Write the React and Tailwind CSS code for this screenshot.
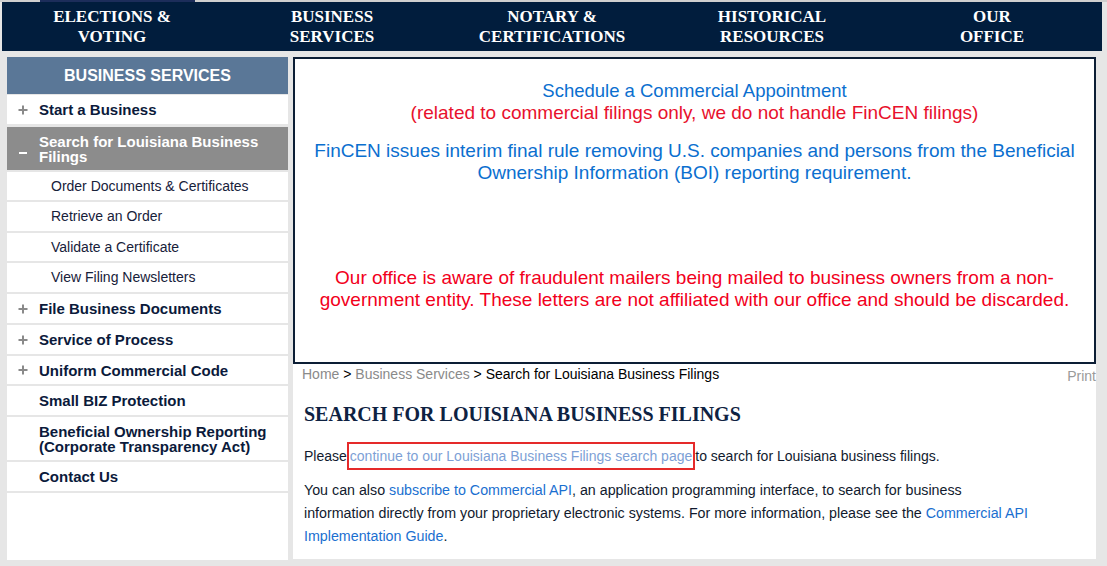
import React from "react";

const navItems = [
  ["ELECTIONS &", "VOTING"],
  ["BUSINESS", "SERVICES"],
  ["NOTARY &", "CERTIFICATIONS"],
  ["HISTORICAL", "RESOURCES"],
  ["OUR", "OFFICE"],
];

function Plus() {
  return (
    <span className="w-[10px] ml-[11px] mr-[11px] flex items-center justify-center">
      <svg width="10" height="10" viewBox="0 0 10 10">
        <rect x="4" y="0.5" width="2" height="9" fill="#8a8a8a" />
        <rect x="0.5" y="4" width="9" height="2" fill="#8a8a8a" />
      </svg>
    </span>
  );
}

function Row({ h, plus, children, bold = true, sub = false }) {
  return (
    <div
      className={`bg-white flex items-center ${bold ? "font-bold text-[15px] text-[#0b1a3b]" : "text-[14px] text-[#17213a]"}`}
      style={{ height: h }}
    >
      {sub ? <span className="w-[44px]" /> : plus ? <Plus /> : <span className="w-[32px]" />}
      <span className="leading-[15px]">{children}</span>
    </div>
  );
}

export default function App() {
  return (
    <div className="w-[1107px] h-[566px] bg-[#e6e6e6] overflow-hidden font-['Liberation_Sans',Arial,sans-serif]">
      <div className="h-[2px] flex bg-[#cfcfcf]">
        <div className="ml-[40px] w-[155px] bg-[#1c2d5a]" />
      </div>
      <nav className="ml-[2px] w-[1100px] h-[49px] bg-[#011d3d] grid grid-cols-5 items-center">
        {navItems.map(([a, b]) => (
          <div
            key={a}
            className="text-center text-white font-bold text-[17px] leading-[19.5px] font-['Liberation_Serif','Times_New_Roman',serif]"
          >
            {a}
            <br />
            {b}
          </div>
        ))}
      </nav>
      <div className="flex mt-[6px]">
        <aside className="ml-[7px] w-[281px] flex flex-col">
          <div className="h-[37px] bg-[#5a7797] flex items-center justify-center text-white font-bold text-[16px]">
            BUSINESS SERVICES
          </div>
          <div className="h-[1px]" />
          <Row h={29} plus>Start a Business</Row>
          <div className="h-[3px]" />
          <div className="h-[43px] bg-[#8c8c8c] flex items-center text-white font-bold text-[15px]">
            <span className="w-[10px] ml-[11px] mr-[11px] flex justify-center">
              <span className="block w-[8px] h-[2px] bg-white mt-[8px]" />
            </span>
            <span className="leading-[15px]">
              Search for Louisiana Business
              <br />
              Filings
            </span>
          </div>
          <div className="flex flex-col gap-[2px] mt-[2px]">
            <Row h={28} sub bold={false}>Order Documents &amp; Certificates</Row>
            <Row h={29} sub bold={false}>Retrieve an Order</Row>
            <Row h={28} sub bold={false}>Validate a Certificate</Row>
            <Row h={29} sub bold={false}>View Filing Newsletters</Row>
            <Row h={29} plus>File Business Documents</Row>
            <Row h={29} plus>Service of Process</Row>
            <Row h={28} plus>Uniform Commercial Code</Row>
            <Row h={29}>Small BIZ Protection</Row>
            <Row h={43}>
              Beneficial Ownership Reporting
              <br />
              (Corporate Transparency Act)
            </Row>
            <Row h={29}>Contact Us</Row>
            <div className="h-[67px] bg-white" />
          </div>
        </aside>
        <main className="ml-[5px] w-[803px] h-[502px] bg-white flex flex-col">
          <div className="h-[307px] border-2 border-[#0c1e35] text-center text-[19px] leading-[22px] whitespace-nowrap pt-[21px]">
            <div className="text-[#0b6fcf] text-[18.5px]">Schedule a Commercial Appointment</div>
            <div className="text-[#e8112d]">
              (related to commercial filings only, we do not handle FinCEN filings)
            </div>
            <div className="text-[#0b6fcf] mt-[16px]">
              FinCEN issues interim final rule removing U.S. companies and persons from the Beneficial
              <br />
              Ownership Information (BOI) reporting requirement.
            </div>
            <div className="text-[#f2001c] mt-[83px]">
              Our office is aware of fraudulent mailers being mailed to business owners from a non-
              <br />
              government entity. These letters are not affiliated with our office and should be discarded.
            </div>
          </div>
          <div className="flex justify-between h-[20px] text-[14px] leading-[20px] pl-[9px]">
            <div className="text-black">
              <span className="text-[#8a8a8a]">Home</span> &gt;{" "}
              <span className="text-[#8a8a8a]">Business Services</span> &gt; Search for Louisiana Business Filings
            </div>
            <div className="text-[#9a9a9a] pt-[2px]">Print</div>
          </div>
          <div className="pl-[11px]">
            <h1 className="mt-[18px] text-[20px] leading-[24px] font-bold text-[#0e2242] font-['Liberation_Serif','Times_New_Roman',serif]">
              SEARCH FOR LOUISIANA BUSINESS FILINGS
            </h1>
            <p className="mt-[19px] text-[14px] leading-[23px] text-[#111a2e] whitespace-nowrap">
              Please
              <span className="border-2 border-[#e52a2a] px-[1px] py-[4px] text-[#7d9fd6]">
                continue to our Louisiana Business Filings search page
              </span>
              to search for Louisiana business filings.
            </p>
            <p className="mt-[11px] text-[14.25px] leading-[23px] text-[#111a2e] whitespace-nowrap">
              You can also <span className="text-[#1a6fd0]">subscribe to Commercial API</span>, an application
              programming interface, to search for business
              <br />
              information directly from your proprietary electronic systems. For more information, please see the{" "}
              <span className="text-[#1a6fd0]">Commercial API</span>
              <br />
              <span className="text-[#1a6fd0]">Implementation Guide</span>.
            </p>
          </div>
        </main>
      </div>
    </div>
  );
}
